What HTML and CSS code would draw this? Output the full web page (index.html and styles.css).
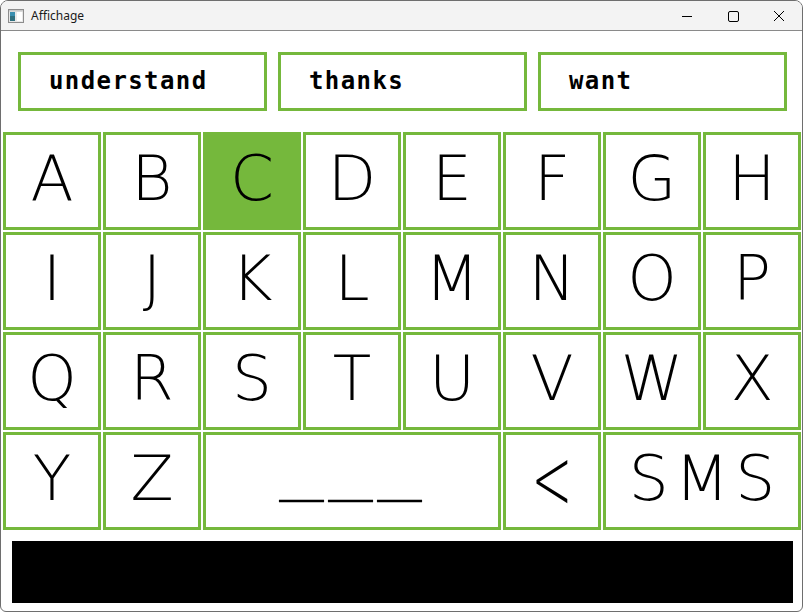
FILE: index.html
```html
<!DOCTYPE html>
<html>
<head>
<meta charset="utf-8">
<link rel="stylesheet" href="styles.css">
</head>
<body>
<div class="window">
  <div class="titlebar">
    <svg class="appicon" width="16" height="14" viewBox="0 0 16 14">
      <rect x="0.5" y="0.5" width="15" height="13" fill="#e8e8e8" stroke="#8c8c8c"/>
      <rect x="2" y="3" width="5" height="9" fill="#2f6f7f"/>
      <rect x="2" y="3" width="5" height="4" fill="#3a8fb0"/>
      <rect x="9" y="3" width="5" height="9" fill="#ffffff"/>
      <rect x="1" y="1" width="14" height="1.5" fill="#c9c9c9"/>
    </svg>
    <span class="title">Affichage</span>
    <div class="controls">
      <svg class="ctl" width="46" height="30" viewBox="0 0 46 30"><line x1="18" y1="15.5" x2="28" y2="15.5" stroke="#000" stroke-width="1"/></svg>
      <svg class="ctl" width="46" height="30" viewBox="0 0 46 30"><rect x="18.5" y="10.5" width="10" height="10" rx="1.5" fill="none" stroke="#000" stroke-width="1"/></svg>
      <svg class="ctl" width="46" height="30" viewBox="0 0 46 30"><path d="M18 10 L28 20 M28 10 L18 20" stroke="#000" stroke-width="1"/></svg>
    </div>
  </div>
  <div class="content">
    <div class="words">
      <div class="word">understand</div>
      <div class="word">thanks</div>
      <div class="word">want</div>
    </div>
    <div class="keys">
      <div class="key">A</div>
      <div class="key">B</div>
      <div class="key active">C</div>
      <div class="key">D</div>
      <div class="key">E</div>
      <div class="key">F</div>
      <div class="key">G</div>
      <div class="key">H</div>
      <div class="key">I</div>
      <div class="key">J</div>
      <div class="key">K</div>
      <div class="key">L</div>
      <div class="key">M</div>
      <div class="key">N</div>
      <div class="key">O</div>
      <div class="key">P</div>
      <div class="key">Q</div>
      <div class="key">R</div>
      <div class="key">S</div>
      <div class="key">T</div>
      <div class="key">U</div>
      <div class="key">V</div>
      <div class="key">W</div>
      <div class="key">X</div>
      <div class="key">Y</div>
      <div class="key">Z</div>
      <div class="key space"><span class="us">_</span><span class="us">_</span><span class="us">_</span></div>
      <div class="key back"><span class="lt">&lt;</span></div>
      <div class="key sms">SMS</div>
    </div>
    <div class="output"></div>
  </div>
</div>
</body>
</html>
```
FILE: styles.css
```css
* { box-sizing: border-box; }
html, body { margin: 0; padding: 0; background: #ffffff; }
.window {
  width: 803px;
  height: 612px;
  border: 1px solid #6e6e6e;
  border-radius: 8px 8px 6px 6px;
  background: #ffffff;
  overflow: hidden;
  display: flex;
  flex-direction: column;
}
.titlebar {
  height: 30px;
  flex: none;
  background: #f3f3f3;
  border-bottom: 1px solid #8a8a8a;
  display: flex;
  align-items: center;
  font-family: "Noto Sans", "Open Sans", sans-serif;
  font-size: 12px;
  color: #1a1a1a;
}
.appicon { margin-left: 7px; margin-right: 7px; }
.title { line-height: 16px; }
.controls { margin-left: auto; display: flex; margin-right: 0px; }
.ctl { display: block; }
.content {
  flex: 1;
  display: flex;
  flex-direction: column;
  padding-left: 2px;
}
.words {
  margin-top: 21px;
  margin-left: 15px;
  display: flex;
  gap: 11px;
}
.word {
  width: 249px;
  height: 59px;
  border: 3px solid #75b83c;
  padding-left: 28px;
  padding-bottom: 4px;
  font-family: "DejaVu Sans Mono", monospace;
  font-weight: bold;
  font-size: 24px;
  letter-spacing: 1.4px;
  line-height: 53px;
  color: #000;
}
.keys {
  margin-top: 21px;
  display: grid;
  grid-template-columns: repeat(8, 98px);
  grid-auto-rows: 98px;
  gap: 2px;
}
.key {
  border: 3px solid #75b83c;
  display: flex;
  align-items: center;
  justify-content: center;
  font-family: "DejaVu Sans", sans-serif;
  font-weight: 200;
  font-size: 63px;
  line-height: 92px;
  padding-bottom: 4px;
  color: #000;
}
.key.active { background: #75b83c; }
.key.space { grid-column: span 3; gap: 24px; padding-right: 4px; }
.us {
  display: inline-block;
  font-size: 50px;
  line-height: 50px;
  position: relative;
  top: -6px;
  transform: scaleX(1.7);
  -webkit-text-stroke: 0.6px #000;
}
.lt { display: inline-block; font-size: 88px; transform: scaleX(0.56); }
.key.sms { grid-column: span 2; letter-spacing: 6px; padding-left: 6px; }
.output {
  margin-top: 11px;
  margin-left: 9px;
  width: 781px;
  height: 62px;
  background: #000;
}
```
